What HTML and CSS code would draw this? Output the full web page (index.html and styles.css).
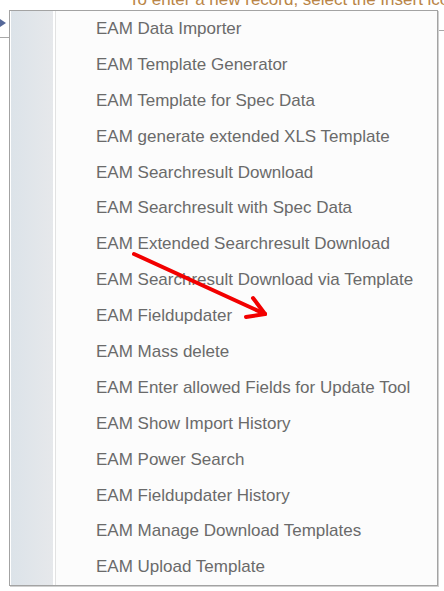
FILE: index.html
```html
<!DOCTYPE html>
<html>
<head>
<meta charset="utf-8">
<link rel="stylesheet" href="styles.css">
</head>
<body>
<div class="page">
  <div class="toolbar">
    <div class="vline"></div>
    <p class="hint">To enter a new record, select the Insert icon</p>
  </div>
  <div class="rowbar">
    <span class="tri"></span>
  </div>
  <div class="hline"></div>
  <div class="rightbox"></div>
</div>

<div class="menu">
  <div class="gutter"></div>
  <ul class="items">
    <li>EAM Data Importer</li>
    <li>EAM Template Generator</li>
    <li>EAM Template for Spec Data</li>
    <li>EAM generate extended XLS Template</li>
    <li>EAM Searchresult Download</li>
    <li>EAM Searchresult with Spec Data</li>
    <li>EAM Extended Searchresult Download</li>
    <li>EAM Searchresult Download via Template</li>
    <li>EAM Fieldupdater</li>
    <li>EAM Mass delete</li>
    <li>EAM Enter allowed Fields for Update Tool</li>
    <li>EAM Show Import History</li>
    <li>EAM Power Search</li>
    <li>EAM Fieldupdater History</li>
    <li>EAM Manage Download Templates</li>
    <li>EAM Upload Template</li>
  </ul>
</div>

<svg class="arrow" width="444" height="591" viewBox="0 0 444 591">
  <g stroke="#f20000" stroke-width="4" stroke-linecap="round" stroke-linejoin="round" fill="none">
    <line x1="134" y1="254" x2="265" y2="314"/>
    <line x1="265" y1="314" x2="253" y2="298"/>
    <line x1="265" y1="314" x2="246" y2="317"/>
  </g>
</svg>
</body>
</html>
```
FILE: styles.css
```css
html, body {
  margin: 0;
  padding: 0;
  background: #ffffff;
  width: 444px;
  height: 591px;
  overflow: hidden;
}

.page {
  position: relative;
  width: 444px;
  height: 591px;
  font-family: "Liberation Sans", Arial, sans-serif;
}

.toolbar {
  display: flex;
  height: 10px;
  overflow: hidden;
}

.vline {
  width: 1px;
  height: 10px;
  margin-left: 15px;
  background: #a9a9a9;
}

.hint {
  margin: -10px 0 0 114px;
  font-size: 17px;
  line-height: 19px;
  color: #b98547;
  white-space: nowrap;
}

.rowbar {
  height: 27px;
  display: flex;
  align-items: center;
}

.tri {
  width: 0;
  height: 0;
  margin-top: -2px;
  border-top: 4px solid transparent;
  border-bottom: 4px solid transparent;
  border-left: 6px solid #56699a;
}

.hline {
  width: 10px;
  height: 1px;
  background: #a8a8a8;
}

.rightbox {
  position: absolute;
  left: 437px;
  top: 30px;
  width: 7px;
  height: 1px;
  background: #a8a8a8;
}

.menu {
  position: absolute;
  left: 9px;
  top: 10px;
  width: 427px;
  height: 574px;
  border: 1px solid #a3a3a3;
  box-shadow: 1px 1px 0 #d0d0d0;
  background: #fcfcfc;
  display: flex;
  font-family: "Liberation Sans", Arial, sans-serif;
}

.gutter {
  width: 42px;
  border-left: 1px solid #ffffff;
  border-right: 2px solid #ffffff;
  background: linear-gradient(to right, #dce3e9, #e6e8eb);
  box-shadow: 1px 0 0 #e2e2e2;
}

.items {
  list-style: none;
  margin: 0;
  padding: 0 0 0 41px;
  flex: 1;
}

.items li {
  height: 35.9px;
  line-height: 35.9px;
  font-size: 17px;
  color: #6a6a6a;
  white-space: nowrap;
}

.arrow {
  position: absolute;
  left: 0;
  top: 0;
  pointer-events: none;
}
```
